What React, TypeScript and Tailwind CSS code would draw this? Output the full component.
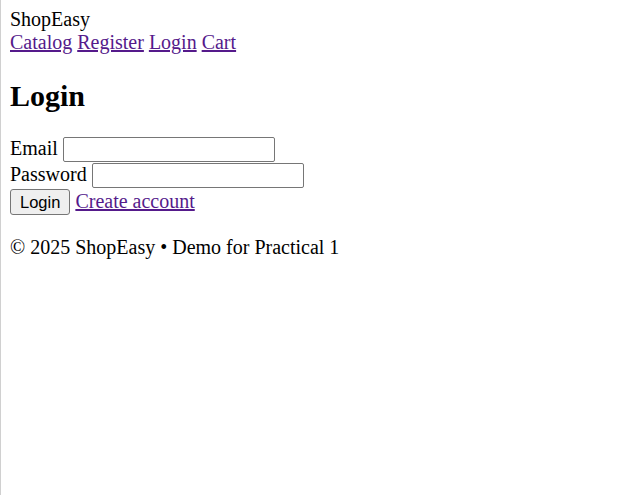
import React from "react";

const serif = { fontFamily: '"Liberation Serif", "Times New Roman", serif' };

export default function App() {
  const link = "text-[#551a8b] underline";
  return (
    <div
      className="min-h-[495px] w-full bg-white text-black border-l border-[#d0d0d0] pl-[9px] pt-[8px] text-[20px] leading-[23px]"
      style={serif}
    >
      <header>
        <div>ShopEasy</div>
        <nav>
          <a href="#" className={link}>Catalog</a>{" "}
          <a href="#" className={link}>Register</a>{" "}
          <a href="#" className={link}>Login</a>{" "}
          <a href="#" className={link}>Cart</a>
        </nav>
      </header>
      <main>
        <h2 className="text-[30px] leading-[34px] font-bold mt-[25px] mb-[23px]">Login</h2>
        <form onSubmit={(e) => e.preventDefault()}>
          <div className="flex items-center h-[26px]">
            <label className="-mt-[2px]">Email</label>
            <input
              type="email"
              className="ml-[5px] w-[212px] h-[25px] border border-[#767676] rounded-[2px] bg-white"
            />
          </div>
          <div className="flex items-center h-[26px]">
            <label className="-mt-[2px]">Password</label>
            <input
              type="password"
              className="ml-[5px] w-[212px] h-[25px] border border-[#767676] rounded-[2px] bg-white"
            />
          </div>
          <div className="flex items-center h-[27px]">
            <button
              type="submit"
              className="h-[26px] px-[9px] bg-[#efefef] border border-[#767676] rounded-[3px] text-[16.5px] leading-[20px]"
              style={{ fontFamily: '"Liberation Sans", Arial, sans-serif' }}
            >
              Login
            </button>
            <a href="#" className={`${link} ml-[5px]`}>Create account</a>
          </div>
        </form>
      </main>
      <footer>
        <p className="mt-[21px]">© 2025 ShopEasy • Demo for Practical 1</p>
      </footer>
    </div>
  );
}
